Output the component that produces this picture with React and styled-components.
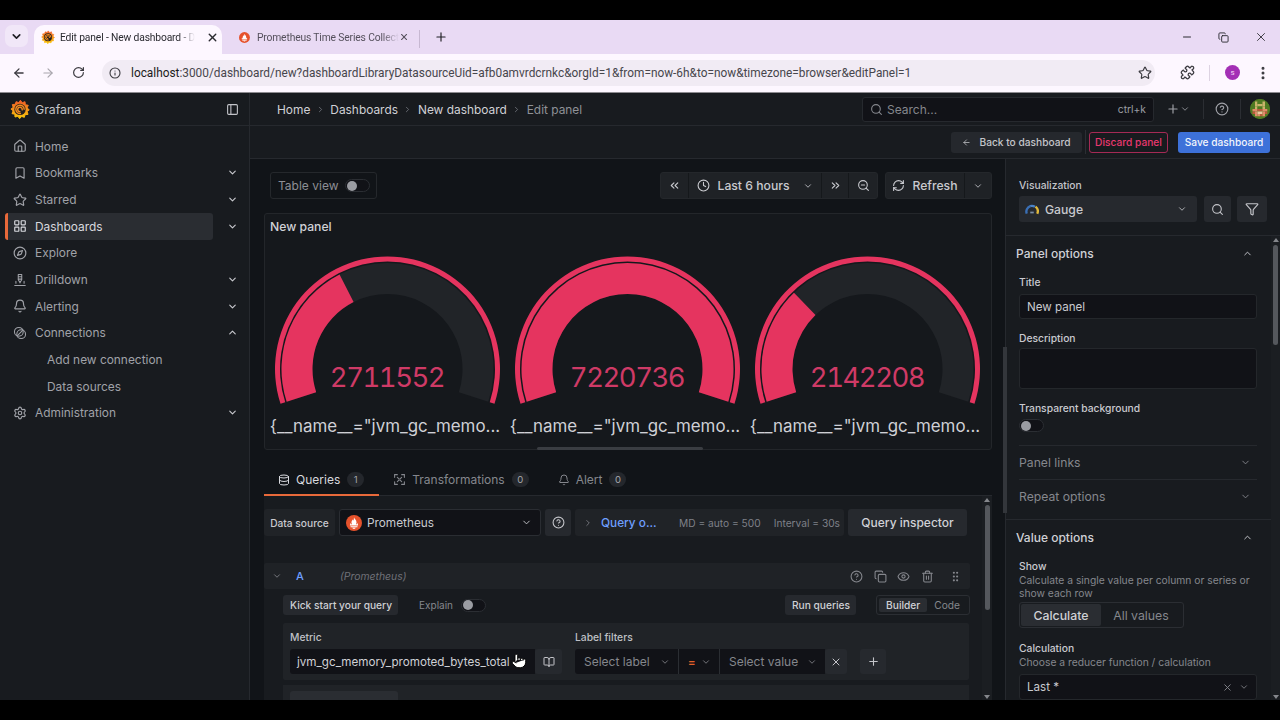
import React from "react";
import styled, { createGlobalStyle } from "styled-components";
import {
  ArrowLeft, ArrowRight, Bell, BookOpen, Bookmark, ChevronDown, ChevronRight, ChevronUp,
  ChevronsLeft, ChevronsRight, CircleHelp, Clock, Compass, Copy, Database, EllipsisVertical,
  Eye, Filter, GripVertical, House, Info, LayoutGrid, Minus, PanelLeft, Plus, Pointer, Puzzle,
  RefreshCw, RotateCw, Search, Settings, Star, Trash2, X, ZoomOut,
} from "lucide-react";

const GlobalStyle = createGlobalStyle`
  html, body { margin: 0; background: #000; }
  body { font-family: Inter, "Noto Sans", sans-serif; }
  * { box-sizing: border-box; }
`;

const Screen = styled.div`
  width: 1280px;
  height: 720px;
  display: flex;
  flex-direction: column;
  overflow: hidden;
  background: #000;
`;
const Letterbox = styled.div`
  height: 20px;
  flex: none;
  background: #000;
`;

/* browser chrome */
const TabStrip = styled.div`
  height: 34px;
  flex: none;
  display: flex;
  align-items: flex-end;
  padding-left: 5px;
  background: #e9daf4;
  color: #1f1f24;
  font-family: Roboto, sans-serif;
  font-size: 10.3px;
  letter-spacing: -0.15px;
`;
const TabMenu = styled.div`
  width: 23px;
  height: 22px;
  align-self: flex-start;
  margin: 5px 6px 0 0;
  border-radius: 7px;
  background: #f1e7f8;
  display: flex;
  align-items: center;
  justify-content: center;
`;
const Tab = styled.div`
  height: 29px;
  width: ${p => p.$w}px;
  display: flex;
  align-items: center;
  padding: 0 ${p => p.$right}px 5px ${p => p.$pad}px;
  border-radius: 10px 10px 0 0;
  background: ${p => (p.$active ? "#fdf7ff" : "transparent")};
  color: ${p => (p.$active ? "#2a2a30" : "#55505c")};
  svg:last-child { margin-left: auto; }
`;
const TabTitle = styled.span`
  margin-left: ${p => p.$gap}px;
  white-space: nowrap;
  mask-image: linear-gradient(to right, #000 88%, transparent);
`;
const TabDivider = styled.div`
  width: 1px;
  height: 18px;
  margin: 0 14px 6px 0;
  background: #c7b8d2;
`;
const NewTab = styled.div`
  height: 29px;
  padding-bottom: 5px;
  display: flex;
  align-items: center;
`;
const WindowControls = styled.div`
  margin-left: auto;
  height: 100%;
  display: flex;
  align-items: center;
  gap: 25px;
  padding-right: 12px;
  color: #2a2a30;
`;
const BrowserBar = styled.div`
  height: 39px;
  flex: none;
  display: flex;
  align-items: center;
  padding: 0 0 1px 12px;
  background: #fdf7ff;
  border-bottom: 1px solid #8d8b90;
  color: #3b3a40;
`;
const NavIcons = styled.div`
  width: 90px;
  flex: none;
  display: flex;
  align-items: center;
  gap: 15px;
  svg:last-child { margin-left: 2px; }
`;
const AddressBar = styled.div`
  width: 1053px;
  height: 26px;
  flex: none;
  display: flex;
  align-items: center;
  padding-left: 7px;
  border-radius: 13px;
  background: #f1ebf4;
`;
const UrlText = styled.span`
  margin-left: 10px;
  font-family: Roboto, sans-serif;
  font-size: 11.85px;
  color: #47464c;
  white-space: nowrap;
  b { font-weight: 400; color: #1c1b20; }
`;
const StarSlot = styled.div`
  margin-left: auto;
  padding-right: 3px;
  display: flex;
`;
const BrowserTools = styled.div`
  margin-left: 25px;
  flex: none;
  display: flex;
  align-items: center;
`;
const ToolDivider = styled.div`
  width: 1px;
  height: 16px;
  margin: 0 15px 0 14px;
  background: #ddd3e2;
`;
const ProfileDot = styled.div`
  width: 15px;
  height: 15px;
  margin-right: 15px;
  border-radius: 50%;
  background: #a32fb5;
  color: #f5d7f8;
  font-family: Roboto, sans-serif;
  font-size: 8px;
  display: flex;
  align-items: center;
  justify-content: center;
`;

/* grafana shell */
const Grafana = styled.div`
  flex: 1;
  min-height: 0;
  display: flex;
  flex-direction: column;
  background: #111418;
  color: #ccccdc;
`;
const TopNav = styled.div`
  height: 33px;
  flex: none;
  display: flex;
  align-items: center;
  background: #181b1f;
  border-bottom: 1px solid #26292e;
`;
const Brand = styled.div`
  width: 250px;
  height: 100%;
  display: flex;
  align-items: center;
  padding: 0 10px;
  border-right: 1px solid #26292e;
  font-size: 12.3px;
  color: #c3c4c9;
  span { margin-left: 5px; flex: 1; }
`;
const Crumbs = styled.div`
  display: flex;
  align-items: center;
  padding-left: 27px;
  width: 612px;
  font-size: 11.9px;
  color: #d0d1d6;
`;
const CrumbSep = styled.span`
  display: flex;
  width: 20px;
  justify-content: center;
  color: #7b7e85;
`;
const CrumbCurrent = styled.span`
  color: #8f9197;
`;
const SearchBox = styled.div`
  width: 292px;
  height: 25px;
  display: flex;
  align-items: center;
  padding: 0 7px;
  gap: 4px;
  border: 1px solid #26292e;
  border-radius: 3px;
  background: #111217;
  font-size: 12px;
  color: #85878d;
  small { margin-left: auto; font-size: 10.3px; color: #9b9da3; }
`;
const NavTools = styled.div`
  display: flex;
  align-items: center;
  padding-left: 12px;
  color: #9fa1a7;
`;
const NavDivider = styled.div`
  width: 1px;
  height: 20px;
  margin: ${p => p.$margin};
  background: #2b2e33;
`;
const Body = styled.div`
  flex: 1;
  min-height: 0;
  display: flex;
`;
const Sidebar = styled.nav`
  width: 250px;
  flex: none;
  padding: 7px 10px 0 5px;
  background: #181b1f;
  border-right: 1px solid #26292e;
`;
const NavItem = styled.div`
  height: 26.67px;
  width: 234px;
  display: flex;
  align-items: center;
  font-size: 11.9px;
  color: ${p => (p.$active ? "#d8d9de" : "#a0a2a8")};
  svg.lead { margin: 0 8px 0 5px; flex: none; }
`;
const NavBody = styled.div`
  width: 208px;
  height: 100%;
  display: flex;
  align-items: center;
  border-radius: 3px;
  padding-left: ${p => (p.$sub ? "39px" : "0")};
  background: ${p => (p.$active ? "#2a2d32" : "transparent")};
  border-left: 3px solid ${p => (p.$active ? "#e8693a" : "transparent")};
`;
const NavChevron = styled.span`
  display: flex;
  margin-left: 14px;
  color: #c8c9ce;
`;
const Work = styled.div`
  flex: 1;
  min-width: 0;
  display: flex;
  flex-direction: column;
`;
const ActionBar = styled.div`
  height: 33px;
  flex: none;
  display: flex;
  align-items: center;
  justify-content: flex-end;
  padding-right: 10px;
  background: #181b1f;
  border-bottom: 1px solid #26292e;
`;
const ActionButton = styled.div`
  width: ${p => p.$w}px;
  height: 21px;
  display: flex;
  align-items: center;
  justify-content: center;
  gap: 8px;
  border-radius: 3px;
  font-size: 10.2px;
  font-weight: 500;
  white-space: nowrap;
  border: 1px solid ${p => (p.$kind === "danger" ? "#a52a55" : "transparent")};
  color: ${p => (p.$kind === "danger" ? "#e8386f" : p.$kind === "primary" ? "#f2f5fb" : "#c4c5ca")};
  background: ${p => (p.$kind === "primary" ? "#3d71d9" : p.$kind === "danger" ? "transparent" : "#25282d")};
  margin-left: ${p => p.$gap || 0}px;
`;
const ActionDivider = styled.div`
  width: 1px;
  height: 24px;
  margin-left: 3px;
  background: #2b2e33;
`;
const Content = styled.div`
  flex: 1;
  min-height: 0;
  display: flex;
`;
const Main = styled.div`
  position: relative;
  width: 755px;
  flex: none;
  padding: 13px 13px 0 14px;
  display: flex;
  flex-direction: column;
`;
const MainThumb = styled.div`
  position: absolute;
  right: -2px;
  top: 188px;
  width: 4px;
  height: 166px;
  background: #33363b;
  z-index: 2;
`;

/* time range toolbar */
const ViewBar = styled.div`
  height: 27px;
  flex: none;
  display: flex;
  align-items: center;
  padding-left: 6px;
`;
const TableView = styled.div`
  width: 107px;
  height: 100%;
  display: flex;
  align-items: center;
  justify-content: space-between;
  padding: 0 6px 0 7px;
  border: 1px solid #25282c;
  border-radius: 3px;
  font-size: 12px;
  color: #8d8f95;
  white-space: nowrap;
`;
const Switch = styled.div`
  width: 25px;
  height: 13px;
  flex: none;
  display: flex;
  align-items: center;
  padding-left: 1px;
  border: 1px solid #2b2e33;
  border-radius: 7px;
  background: #111217;
  &::before {
    content: "";
    width: 10px;
    height: 10px;
    border-radius: 50%;
    background: #9a9ca2;
  }
`;
const ButtonGroup = styled.div`
  height: 100%;
  display: flex;
  margin-left: ${p => (p.$auto ? "auto" : "7px")};
  border-radius: 3px;
  overflow: hidden;
  background: #1f2226;
  border: 1px solid #24272b;
`;
const GroupCell = styled.div`
  width: ${p => p.$w}px;
  height: 100%;
  display: flex;
  align-items: center;
  justify-content: center;
  gap: 7px;
  font-size: 12.2px;
  font-weight: 500;
  color: #c9cacf;
  & + & { border-left: 1px solid #15181b; }
  svg:last-child:not(:first-child) { margin-left: 6px; }
`;

/* gauge panel */
const Panel = styled.section`
  position: relative;
  height: 237px;
  flex: none;
  margin-top: 14px;
  padding-left: 2px;
  border: 1px solid #23262a;
  border-radius: 3px;
  background: #15181c;
`;
const PanelTitle = styled.div`
  height: 25px;
  display: flex;
  align-items: center;
  padding-left: 3px;
  font-size: 12.2px;
  font-weight: 500;
  color: #d0d1d6;
`;
const GaugeRow = styled.div`
  display: flex;
  margin-top: 10px;
`;
const GaugeCell = styled.div`
  position: relative;
  width: 240px;
  flex: none;
`;
const GaugeSvg = styled.svg`
  display: block;
`;
const GaugeValue = styled.div`
  position: absolute;
  left: 0;
  right: 0;
  top: 108px;
  line-height: 40px;
  text-align: center;
  font-size: 27.5px;
  font-variant-numeric: tabular-nums;
  letter-spacing: -1.5px;
  color: #cf3a66;
`;
const GaugeName = styled.div`
  margin-top: 5px;
  padding-right: 4px;
  text-align: center;
  line-height: 24px;
  font-size: 16.9px;
  color: #cfd0d6;
  white-space: nowrap;
`;
const PanelThumb = styled.div`
  position: absolute;
  left: 272px;
  bottom: -1px;
  width: 166px;
  height: 3px;
  border-radius: 2px;
  background: #3a3d42;
`;

/* query editor */
const TabBar = styled.div`
  height: 31px;
  flex: none;
  margin-top: 15px;
  display: flex;
  border-bottom: 1px solid #26292e;
  font-size: 12px;
`;
const EditorTab = styled.div`
  height: 31px;
  display: flex;
  align-items: center;
  padding: 0 15px 0 14px;
  gap: 6px;
  color: ${p => (p.$active ? "#d8d9de" : "#85878d")};
  border-bottom: 2px solid ${p => (p.$active ? "#e8693a" : "transparent")};
`;
const Count = styled.span`
  width: 17px;
  height: 15px;
  margin-left: 1px;
  border-radius: 8px;
  display: flex;
  align-items: center;
  justify-content: center;
  font-size: 9.5px;
  background: #24272c;
  color: #a5a7ad;
`;
const QueryPane = styled.div`
  flex: 1;
  min-height: 0;
  display: flex;
  background: #181b1f;
`;
const QueryBody = styled.div`
  width: 718px;
  flex: none;
  overflow: hidden;
`;
const ScrollTrack = styled.div`
  flex: none;
  width: ${p => p.$w}px;
  display: flex;
  flex-direction: column;
  align-items: center;
  padding-top: 2px;
  background: #1b1e22;
  &::before {
    content: "";
    border: 3px solid transparent;
    border-bottom: 4px solid #85878c;
    border-top: 0;
  }
`;
const ScrollThumb = styled.div`
  width: 5px;
  height: ${p => p.$h}px;
  margin-top: 3px;
  border-radius: 3px;
  background: #55585d;
`;
const ScrollArrowDown = styled.div`
  margin-top: auto;
  margin-bottom: 1px;
  border: 3px solid transparent;
  border-top: 4px solid #85878c;
  border-bottom: 0;
`;
const SourceRow = styled.div`
  display: flex;
  align-items: center;
  height: 27px;
  margin-top: 13px;
  font-size: 10.2px;
`;
const SourceLabel = styled.div`
  width: 71px;
  height: 100%;
  display: flex;
  align-items: center;
  justify-content: center;
  border-radius: 3px;
  font-weight: 500;
  color: #c9cacf;
  background: #202327;
`;
const SourceSelect = styled.div`
  width: 202px;
  height: 100%;
  margin-left: 4px;
  display: flex;
  align-items: center;
  padding: 0 8px 0 6px;
  gap: 5px;
  border: 1px solid #2a2d32;
  border-radius: 3px;
  background: #111217;
  font-size: 11.8px;
  color: #c9cacf;
  svg:last-child { margin-left: auto; }
`;
const SquareButton = styled.div`
  width: ${p => p.$w || 26}px;
  height: ${p => p.$h || 27}px;
  flex: none;
  margin-left: ${p => p.$gap ?? 4}px;
  display: flex;
  align-items: center;
  justify-content: center;
  border-radius: 3px;
  background: #26292e;
  color: #c4c5ca;
`;
const OptionsBar = styled.div`
  width: 269px;
  height: 100%;
  margin-left: 4px;
  display: flex;
  align-items: center;
  padding-left: 8px;
  border-radius: 3px;
  background: #202327;
  color: #7e8087;
  white-space: nowrap;
`;
const OptionsLink = styled.span`
  width: 78px;
  margin-left: 8px;
  font-size: 11.8px;
  font-weight: 500;
  color: #6e9fff;
`;
const OptionsMeta = styled.span`
  font-size: 10.2px;
  margin-right: ${p => p.$gap || 0}px;
`;
const InspectorButton = styled.div`
  width: 119px;
  height: 100%;
  margin-left: 4px;
  display: flex;
  align-items: center;
  justify-content: center;
  border-radius: 3px;
  background: #26292e;
  font-size: 12px;
  font-weight: 500;
  color: #d0d1d6;
`;
const QueryHead = styled.div`
  width: 706px;
  height: 26px;
  margin-top: 27px;
  display: flex;
  align-items: center;
  padding-left: 8px;
  border-radius: 2px;
  background: #1f2226;
  color: #85878d;
`;
const RefId = styled.span`
  width: 44px;
  margin-left: 14px;
  font-size: 11px;
  font-weight: 500;
  color: #6e9fff;
`;
const SourceName = styled.span`
  font-size: 10.4px;
  font-style: italic;
  color: #6f7178;
`;
const HeadIcons = styled.div`
  margin-left: auto;
  display: flex;
  align-items: center;
  gap: 10.5px;
  padding-right: 8px;
  svg:last-child { margin-left: 5px; }
`;
const BuilderBar = styled.div`
  width: 687px;
  height: 20px;
  margin: 6px 0 0 19px;
  display: flex;
  align-items: center;
  font-size: 10.2px;
`;
const SmallButton = styled.div`
  height: 20px;
  display: flex;
  align-items: center;
  padding: 0 6px 0 7px;
  border-radius: 3px;
  font-weight: 500;
  color: #cfd0d5;
  background: #26292e;
  margin-left: ${p => (p.$auto ? "auto" : 0)};
`;
const ExplainLabel = styled.span`
  margin: 0 8px 0 21px;
  font-size: 10px;
  color: #85878d;
`;
const ModeGroup = styled.div`
  height: 20px;
  margin-left: 20px;
  padding: 2px;
  display: flex;
  align-items: center;
  border: 1px solid #2b2e33;
  border-radius: 3px;
`;
const ModeOption = styled.div`
  height: 100%;
  display: flex;
  align-items: center;
  padding: 0 7px;
  border-radius: 2px;
  font-weight: ${p => (p.$active ? 500 : 400)};
  color: ${p => (p.$active ? "#d0d1d6" : "#85878d")};
  background: ${p => (p.$active ? "#2a2d32" : "transparent")};
`;
const MetricCard = styled.div`
  width: 686px;
  height: 57px;
  margin: 8px 0 0 19px;
  padding: 8px 7px 0;
  border-radius: 2px;
  background: #202327;
  display: flex;
`;
const FieldLabel = styled.div`
  height: 13px;
  margin-bottom: 5px;
  font-size: 10.3px;
  font-weight: 500;
  line-height: 13px;
  color: #bfc0c5;
`;
const MetricField = styled.div`
  position: relative;
  width: 285px;
  flex: none;
`;
const InputRow = styled.div`
  display: flex;
  align-items: center;
  height: 25px;
`;
const MetricInput = styled.div`
  width: 245px;
  height: 25px;
  display: flex;
  align-items: center;
  padding-left: 7px;
  border-radius: 3px 0 0 3px;
  background: #111217;
  font-size: 11.65px;
  color: #cfd0d5;
  white-space: nowrap;
`;
const HandCursor = styled.div`
  position: absolute;
  left: 221px;
  top: 22px;
  display: flex;
  svg { fill: #fff; stroke: #000; }
`;
const FilterPart = styled.div`
  width: ${p => p.$w}px;
  height: 25px;
  flex: none;
  display: flex;
  align-items: center;
  justify-content: space-between;
  padding: 0 8px 0 9px;
  background: #111217;
  font-size: 12px;
  color: #85878d;
  border-left: ${p => (p.$joined ? "1px solid #2b2e33" : "0")};
  border-radius: ${p => (p.$joined ? "0" : "3px 0 0 3px")};
`;
const OperatorSign = styled.span`
  font-size: 11px;
  font-weight: 700;
  color: #e0602a;
`;
const NextCard = styled.div`
  width: 686px;
  height: 30px;
  margin: 5px 0 0 19px;
  padding: 6px 7px 0;
  background: #202327;
`;
const NextButton = styled.div`
  width: 108px;
  height: 24px;
  border-radius: 3px;
  background: #2a2d32;
`;

/* right options pane */
const Options = styled.aside`
  flex: 1;
  min-width: 0;
  display: flex;
  flex-direction: column;
  background: #181b1f;
  border-left: 1px solid #26292e;
`;
const VizHead = styled.div`
  height: 77px;
  flex: none;
  padding: 19px 13px 0;
  border-bottom: 1px solid #26292e;
`;
const VizLabel = styled.div`
  height: 14px;
  margin-bottom: 4px;
  font-size: 10.3px;
  font-weight: 500;
  line-height: 14px;
  color: #c4c5ca;
`;
const VizRow = styled.div`
  display: flex;
`;
const VizSelect = styled.div`
  width: 178px;
  height: 26px;
  display: flex;
  align-items: center;
  gap: 6px;
  padding: 0 10px 0 6px;
  border-radius: 3px;
  background: #26292e;
  font-size: 12.2px;
  font-weight: 500;
  color: #c9cacf;
  svg:last-child { margin-left: auto; }
`;
const OptionsScroll = styled.div`
  flex: 1;
  min-height: 0;
  display: flex;
`;
const OptionsBody = styled.div`
  width: 265px;
  flex: none;
  overflow: hidden;
`;
const GroupHead = styled.div`
  height: 34px;
  display: flex;
  align-items: center;
  justify-content: space-between;
  padding: 0 18px 0 10px;
  font-size: 12px;
  font-weight: 500;
  color: #d0d1d6;
`;
const Group = styled.div`
  padding-bottom: ${p => p.$bottom || 0}px;
  border-bottom: ${p => (p.$line ? "1px solid #26292e" : "0")};
`;
const Field = styled.div`
  padding: 0 14px 0 13px;
  margin-top: ${p => p.$top || 0}px;
`;
const OptLabel = styled.div`
  font-size: 10.3px;
  line-height: 14px;
  font-weight: 500;
  color: #c9cacf;
`;
const OptHint = styled.div`
  margin-top: 1px;
  font-size: 10.3px;
  line-height: 13px;
  color: #85878d;
`;
const TextField = styled.div`
  height: ${p => p.$h}px;
  margin-top: ${p => p.$top ?? 4}px;
  padding: 0 7px;
  display: flex;
  align-items: center;
  border: 1px solid #24272b;
  border-radius: 3px;
  background: #111217;
  font-size: 11.6px;
  color: #c9cacf;
`;
const SwitchRow = styled.div`
  margin-top: 4px;
`;
const FoldRow = styled.div`
  height: 34px;
  margin: ${p => p.$top || 0}px 14px 0 13px;
  padding-right: 6px;
  display: flex;
  align-items: center;
  justify-content: space-between;
  border-top: 1px solid #26292e;
  font-size: 12.2px;
  color: #85878d;
`;
const Segments = styled.div`
  width: 165px;
  height: 26px;
  margin-top: 2px;
  padding: 1px;
  display: flex;
  border: 1px solid #2b2e33;
  border-radius: 3px;
`;
const Segment = styled.div`
  width: 80px;
  display: flex;
  align-items: center;
  justify-content: center;
  border-radius: 2px;
  font-size: 12.3px;
  font-weight: ${p => (p.$active ? 500 : 400)};
  color: ${p => (p.$active ? "#d0d1d6" : "#85878d")};
  background: ${p => (p.$active ? "#2a2d32" : "transparent")};
`;
const CalcSelect = styled(TextField)`
  justify-content: space-between;
  span { display: flex; align-items: center; gap: 6px; color: #85878d; }
`;

const GrafanaLogo = ({ size, id }) => (
  <svg width={size} height={size} viewBox="0 0 24 24">
    <defs>
      <linearGradient id={id} x1="0" y1="1" x2="0" y2="0">
        <stop offset="0" stopColor="#fbca0a" />
        <stop offset="1" stopColor="#f05a28" />
      </linearGradient>
    </defs>
    <path
      fill={`url(#${id})`}
      stroke={`url(#${id})`}
      strokeWidth="1.2"
      strokeLinejoin="round"
      d="M12.5 1.5l2.2 3 3.3-1.3.4 3.6 3.5.8-1.5 3.2 2.7 2.1-2.5 2.2 1 3.4-3.5.3-.9 3.2-3.2-1.1-2.4 2.6-2.2-2.7-3.4.8-.2-3.4-3.4-.6 1.3-3.4-2.6-2.1 2.7-2-1-3.4 3.5-.4 1-3.1 3.1 1.1z"
    />
    <circle cx="12" cy="12.5" r="6.8" fill="#23201f" />
    <path
      d="M17 12.2a5 5 0 1 0-4.6 5.2M14.6 13a2.7 2.7 0 1 0-2.7 2.2"
      fill="none"
      stroke="#f58a1f"
      strokeWidth="1.7"
      strokeLinecap="round"
    />
  </svg>
);

const PrometheusLogo = ({ size }) => (
  <svg width={size} height={size} viewBox="0 0 24 24">
    <circle cx="12" cy="12" r="12" fill="#e6522c" />
    <path
      fill="#fff"
      d="M12 3.5c.6 2.6 3.8 3.8 3.8 7.6 0 1.1-.4 2-1 2.7h1.6l.8-2.3 1 4.1H5.8l1-4.1.8 2.3h1.6c-.6-.7-1-1.6-1-2.7 0-2 1.4-2.6 1.6-4.2.7.5 1 1 1.2 1.8.6-1.2 1-3 1-5.2zM6.8 16.8h10.4v1.7H6.8zM9.4 19.3h5.2c-.4 1-1.4 1.6-2.6 1.6s-2.2-.6-2.6-1.6z"
    />
  </svg>
);

const DrillIcon = ({ size }) => (
  <svg className="lead" width={size} height={size} viewBox="0 0 24 24" fill="none" stroke="currentColor" strokeWidth="1.8" strokeLinecap="round">
    <path d="M9 2.5h6M9 6.5h6M9 10.5h6M9 2.5v9l3 5 3-5v-9" />
    <path d="M3 21.5h18M5 14v3.5M19 14v3.5" />
  </svg>
);

const ConnectIcon = ({ size }) => (
  <svg className="lead" width={size} height={size} viewBox="0 0 24 24" fill="none" stroke="currentColor" strokeWidth="1.8" strokeLinecap="round">
    <circle cx="10" cy="10" r="7.5" />
    <circle cx="14" cy="14" r="7.5" />
    <path d="M8 16L16 8" />
  </svg>
);

const TransformIcon = () => (
  <svg width="13" height="13" viewBox="0 0 24 24" fill="none" stroke="currentColor" strokeWidth="2" strokeLinecap="round">
    <path d="M3 8V3h5M16 3h5v5M21 16v5h-5M8 21H3v-5" />
    <path d="M8 8l3 3M16 8l-3 3M8 16l3-3M16 16l-3-3" />
  </svg>
);

const GaugeGlyph = () => (
  <svg width="14" height="12" viewBox="0 0 24 20" fill="none" strokeWidth="4">
    <path d="M3 18A10 10 0 0 1 9 5" stroke="#3a6fb5" />
    <path d="M9 5a10 10 0 0 1 8 1" stroke="#4a83c8" />
    <path d="M18 6a10 10 0 0 1 3 12" stroke="#e2b93b" />
    <path d="M9 16h6" stroke="#7b8fa8" strokeWidth="3" />
  </svg>
);

const AVATAR = [
  "..gggg..",
  ".gyggyg.",
  "ggyyyygg",
  "ggyggygg",
  "gpprrppg",
  "grpwwprg",
  ".gpprpg.",
  "..gggg..",
];
const AVATAR_COLORS = { g: "#4f7a22", y: "#c8b46a", p: "#e08a6a", r: "#b85a3c", w: "#e8c8a0" };

const Avatar = () => (
  <svg width="20" height="20" viewBox="0 0 8 8">
    <defs>
      <clipPath id="avatar-clip">
        <circle cx="4" cy="4" r="4" />
      </clipPath>
    </defs>
    <g clipPath="url(#avatar-clip)">
      <rect width="8" height="8" fill="#4f7a22" />
      {AVATAR.map((row, y) =>
        row.split("").map((c, x) =>
          AVATAR_COLORS[c] ? <rect key={`${x}-${y}`} x={x} y={y} width="1" height="1" fill={AVATAR_COLORS[c]} /> : null
        )
      )}
    </g>
  </svg>
);

const point = (cx, cy, r, deg) => {
  const a = ((deg - 90) * Math.PI) / 180;
  return `${(cx + r * Math.cos(a)).toFixed(2)} ${(cy + r * Math.sin(a)).toFixed(2)}`;
};
const sector = (cx, cy, r0, r1, a0, a1) => {
  const large = a1 - a0 > 180 ? 1 : 0;
  return `M${point(cx, cy, r1, a0)}A${r1} ${r1} 0 ${large} 1 ${point(cx, cy, r1, a1)}L${point(cx, cy, r0, a1)}A${r0} ${r0} 0 ${large} 0 ${point(cx, cy, r0, a0)}Z`;
};

const MAX_VALUE = 7220736;

const Gauge = ({ value }) => {
  const end = -108 + (value / MAX_VALUE) * 216;
  return (
    <GaugeCell>
      <GaugeSvg width="240" height="160" viewBox="0 0 240 160">
        <path d={sector(120.5, 120, 107.5, 112.5, -108, 108)} fill="#e5345f" />
        <path d={sector(120.5, 120, 75, 106, -108, 108)} fill="#212428" />
        <path d={sector(120.5, 120, 75, 106, -108, end)} fill="#e5345f" />
      </GaugeSvg>
      <GaugeValue>{value}</GaugeValue>
      <GaugeName>{'{__name__="jvm_gc_memo...'}</GaugeName>
    </GaugeCell>
  );
};

const NAV = [
  { label: "Home", icon: <House className="lead" size={14} /> },
  { label: "Bookmarks", icon: <Bookmark className="lead" size={14} />, chevron: "down" },
  { label: "Starred", icon: <Star className="lead" size={14} />, chevron: "down" },
  { label: "Dashboards", icon: <LayoutGrid className="lead" size={14} />, chevron: "down", active: true },
  { label: "Explore", icon: <Compass className="lead" size={14} /> },
  { label: "Drilldown", icon: <DrillIcon size={14} />, chevron: "down" },
  { label: "Alerting", icon: <Bell className="lead" size={14} />, chevron: "down" },
  { label: "Connections", icon: <ConnectIcon size={14} />, chevron: "up" },
  { label: "Add new connection", sub: true },
  { label: "Data sources", sub: true },
  { label: "Administration", icon: <Settings className="lead" size={14} />, chevron: "down" },
];

export default function App() {
  return (
    <Screen>
      <GlobalStyle />
      <Letterbox />
      <TabStrip>
        <TabMenu><ChevronDown size={13} strokeWidth={3} /></TabMenu>
        <Tab $active $w={188} $pad={7} $right={3}>
          <GrafanaLogo size={14} id="tab-logo" />
          <TabTitle $gap={5}>Edit panel - New dashboard - D</TabTitle>
          <X size={13} strokeWidth={2.5} />
        </Tab>
        <Tab $w={197} $pad={17} $right={10}>
          <PrometheusLogo size={13} />
          <TabTitle $gap={7}>Prometheus Time Series Collect</TabTitle>
          <X size={12} strokeWidth={2.5} />
        </Tab>
        <TabDivider />
        <NewTab><Plus size={14} /></NewTab>
        <WindowControls>
          <Minus size={12} />
          <Copy size={11} />
          <X size={14} strokeWidth={1.5} />
        </WindowControls>
      </TabStrip>
      <BrowserBar>
        <NavIcons>
          <ArrowLeft size={14} strokeWidth={2.2} />
          <ArrowRight size={14} color="#a9a6ad" />
          <RotateCw size={13} strokeWidth={2.2} />
        </NavIcons>
        <AddressBar>
          <Info size={12} strokeWidth={2.2} />
          <UrlText>
            <b>localhost</b>:3000/dashboard/new?dashboardLibraryDatasourceUid=afb0amvrdcrnkc&orgId=1&from=now-6h&to=now&timezone=browser&editPanel=1
          </UrlText>
          <StarSlot><Star size={14} strokeWidth={2} /></StarSlot>
        </AddressBar>
        <BrowserTools>
          <Puzzle size={15} strokeWidth={2} />
          <ToolDivider />
          <ProfileDot>s</ProfileDot>
          <EllipsisVertical size={16} strokeWidth={2.5} />
        </BrowserTools>
      </BrowserBar>
      <Grafana>
        <TopNav>
          <Brand>
            <GrafanaLogo size={20} id="brand-logo" />
            <span>Grafana</span>
            <PanelLeft size={13} />
          </Brand>
          <Crumbs>
            Home<CrumbSep><ChevronRight size={9} /></CrumbSep>
            Dashboards<CrumbSep><ChevronRight size={9} /></CrumbSep>
            New dashboard<CrumbSep><ChevronRight size={9} /></CrumbSep>
            <CrumbCurrent>Edit panel</CrumbCurrent>
          </Crumbs>
          <SearchBox>
            <Search size={13} />
            Search...
            <small>ctrl+k</small>
          </SearchBox>
          <NavTools>
            <Plus size={14} />
            <ChevronDown size={10} />
            <NavDivider $margin="0 11px 0 13px" />
            <CircleHelp size={14} />
            <NavDivider $margin="0 9px 0 11px" />
            <Avatar />
          </NavTools>
        </TopNav>
        <Body>
          <Sidebar>
            {NAV.map(item => (
              <NavItem key={item.label} $active={item.active}>
                <NavBody $active={item.active} $sub={item.sub}>
                  {item.icon}
                  {item.label}
                </NavBody>
                {item.chevron && (
                  <NavChevron>
                    {item.chevron === "up" ? <ChevronUp size={11} strokeWidth={2.5} /> : <ChevronDown size={11} strokeWidth={2.5} />}
                  </NavChevron>
                )}
              </NavItem>
            ))}
          </Sidebar>
          <Work>
            <ActionBar>
              <ActionButton $w={131}>
                <ArrowLeft size={9} />
                Back to dashboard
              </ActionButton>
              <ActionDivider />
              <ActionButton $kind="danger" $gap={3} $w={79}>Discard panel</ActionButton>
              <ActionButton $kind="primary" $gap={10} $w={92}>Save dashboard</ActionButton>
            </ActionBar>
            <Content>
              <Main>
                <MainThumb />
                <ViewBar>
                  <TableView>
                    Table view
                    <Switch />
                  </TableView>
                  <ButtonGroup $auto>
                    <GroupCell $w={27}><ChevronsLeft size={13} /></GroupCell>
                    <GroupCell $w={133}><Clock size={13} />Last 6 hours<ChevronDown size={10} /></GroupCell>
                    <GroupCell $w={27}><ChevronsRight size={13} /></GroupCell>
                    <GroupCell $w={29}><ZoomOut size={13} /></GroupCell>
                  </ButtonGroup>
                  <ButtonGroup>
                    <GroupCell $w={78}><RefreshCw size={13} />Refresh</GroupCell>
                    <GroupCell $w={27}><ChevronDown size={10} /></GroupCell>
                  </ButtonGroup>
                </ViewBar>
                <Panel>
                  <PanelTitle>New panel</PanelTitle>
                  <GaugeRow>
                    <Gauge value={2711552} />
                    <Gauge value={7220736} />
                    <Gauge value={2142208} />
                  </GaugeRow>
                  <PanelThumb />
                </Panel>
                <TabBar>
                  <EditorTab $active><Database size={12} />Queries<Count>1</Count></EditorTab>
                  <EditorTab><TransformIcon />Transformations<Count>0</Count></EditorTab>
                  <EditorTab><Bell size={12} />Alert<Count>0</Count></EditorTab>
                </TabBar>
                <QueryPane>
                  <QueryBody>
                    <SourceRow>
                      <SourceLabel>Data source</SourceLabel>
                      <SourceSelect>
                        <PrometheusLogo size={16} />
                        Prometheus
                        <ChevronDown size={11} />
                      </SourceSelect>
                      <SquareButton $w={26}><CircleHelp size={13} /></SquareButton>
                      <OptionsBar>
                        <ChevronRight size={10} />
                        <OptionsLink>Query o...</OptionsLink>
                        <OptionsMeta $gap={13}>MD = auto = 500</OptionsMeta>
                        <OptionsMeta>Interval = 30s</OptionsMeta>
                      </OptionsBar>
                      <InspectorButton>Query inspector</InspectorButton>
                    </SourceRow>
                    <QueryHead>
                      <ChevronDown size={10} />
                      <RefId>A</RefId>
                      <SourceName>(Prometheus)</SourceName>
                      <HeadIcons>
                        <CircleHelp size={13} />
                        <Copy size={13} />
                        <Eye size={13} />
                        <Trash2 size={13} />
                        <GripVertical size={13} />
                      </HeadIcons>
                    </QueryHead>
                    <BuilderBar>
                      <SmallButton>Kick start your query</SmallButton>
                      <ExplainLabel>Explain</ExplainLabel>
                      <Switch />
                      <SmallButton $auto>Run queries</SmallButton>
                      <ModeGroup>
                        <ModeOption $active>Builder</ModeOption>
                        <ModeOption>Code</ModeOption>
                      </ModeGroup>
                    </BuilderBar>
                    <MetricCard>
                      <MetricField>
                        <FieldLabel>Metric</FieldLabel>
                        <InputRow>
                          <MetricInput>jvm_gc_memory_promoted_bytes_total</MetricInput>
                          <SquareButton $w={27} $h={25} $gap={0}><BookOpen size={12} /></SquareButton>
                        </InputRow>
                        <HandCursor><Pointer size={16} strokeWidth={1.4} /></HandCursor>
                      </MetricField>
                      <div>
                        <FieldLabel>Label filters</FieldLabel>
                        <InputRow>
                          <FilterPart $w={103}>Select label<ChevronDown size={10} /></FilterPart>
                          <FilterPart $w={41} $joined><OperatorSign>=</OperatorSign><ChevronDown size={10} /></FilterPart>
                          <FilterPart $w={106} $joined>Select value<ChevronDown size={10} /></FilterPart>
                          <SquareButton $w={22} $h={25} $gap={0}><X size={12} /></SquareButton>
                          <SquareButton $w={26} $h={25} $gap={13}><Plus size={13} /></SquareButton>
                        </InputRow>
                      </div>
                    </MetricCard>
                    <NextCard><NextButton /></NextCard>
                  </QueryBody>
                  <ScrollTrack $w={10}>
                    <ScrollThumb $h={105} />
                    <ScrollArrowDown />
                  </ScrollTrack>
                </QueryPane>
              </Main>
              <Options>
                <VizHead>
                  <VizLabel>Visualization</VizLabel>
                  <VizRow>
                    <VizSelect>
                      <GaugeGlyph />
                      Gauge
                      <ChevronDown size={10} />
                    </VizSelect>
                    <SquareButton $w={27} $h={26} $gap={7}><Search size={13} /></SquareButton>
                    <SquareButton $w={30} $h={26} $gap={6}><Filter size={14} /></SquareButton>
                  </VizRow>
                </VizHead>
                <OptionsScroll>
                  <OptionsBody>
                    <Group $line $bottom={6}>
                      <GroupHead>Panel options<ChevronUp size={11} /></GroupHead>
                      <Field $top={5}>
                        <OptLabel>Title</OptLabel>
                        <TextField $h={25} $top={5}>New panel</TextField>
                      </Field>
                      <Field $top={12}>
                        <OptLabel>Description</OptLabel>
                        <TextField $h={41} $top={3} />
                      </Field>
                      <Field $top={12}>
                        <OptLabel>Transparent background</OptLabel>
                        <SwitchRow><Switch /></SwitchRow>
                      </Field>
                      <FoldRow $top={13}>Panel links<ChevronDown size={11} /></FoldRow>
                      <FoldRow>Repeat options<ChevronDown size={11} /></FoldRow>
                    </Group>
                    <Group>
                      <GroupHead>Value options<ChevronUp size={11} /></GroupHead>
                      <Field $top={5}>
                        <OptLabel>Show</OptLabel>
                        <OptHint>Calculate a single value per column or series or show each row</OptHint>
                        <Segments>
                          <Segment $active>Calculate</Segment>
                          <Segment>All values</Segment>
                        </Segments>
                      </Field>
                      <Field $top={13}>
                        <OptLabel>Calculation</OptLabel>
                        <OptHint>Choose a reducer function / calculation</OptHint>
                        <CalcSelect $h={26} $top={5}>
                          Last *
                          <span><X size={11} /><ChevronDown size={10} /></span>
                        </CalcSelect>
                      </Field>
                    </Group>
                  </OptionsBody>
                  <ScrollTrack $w={9}>
                    <ScrollThumb $h={100} />
                    <ScrollArrowDown />
                  </ScrollTrack>
                </OptionsScroll>
              </Options>
            </Content>
          </Work>
        </Body>
      </Grafana>
      <Letterbox />
    </Screen>
  );
}
